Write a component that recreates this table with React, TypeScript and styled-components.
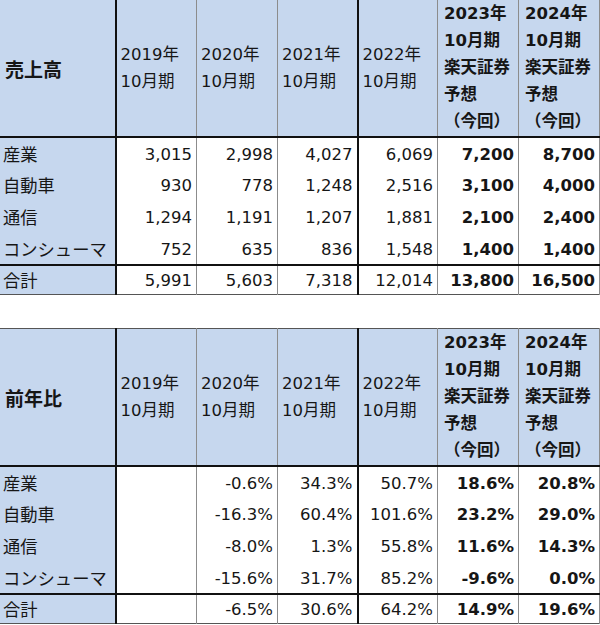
import * as React from "react";
import styled, { createGlobalStyle } from "styled-components";

const GlobalStyle = createGlobalStyle`
  html, body {
    margin: 0;
    padding: 0;
    background: #ffffff;
  }
  body {
    font-family: "DejaVu Sans", "Noto Sans CJK JP", sans-serif;
    color: #161616;
  }
`;

const BLUE = "#c6d7ee";
const THIN = "1px solid #8c8c8c";
const THICK = "2px solid #111111";

const Page = styled.div`
  width: 600px;
  margin: -1px 0 0 -1px;
  display: flex;
  flex-direction: column;
  gap: 33px;
`;

const Table = styled.table`
  border-collapse: collapse;
  table-layout: fixed;
  width: 600px;
  font-size: 16.5px;
  border: 1px solid #555555;
`;

const HeadRow = styled.tr`
  height: 137px;
  border-bottom: ${THICK};
`;

const BodyRow = styled.tr<{ $total?: boolean }>`
  height: ${(p) => (p.$total ? "30px" : "32px")};
  border-top: ${(p) => (p.$total ? THICK : "none")};
`;

// corner cell: 売上高 / 前年比
const Corner = styled.th`
  background: ${BLUE};
  text-align: left;
  vertical-align: middle;
  padding: 2px 0 0 5px;
  font-size: 19px;
  font-weight: bold;
  border-right: ${THICK};
`;

const YearHead = styled.th<{ $bold?: boolean; $thickRight?: boolean }>`
  background: ${BLUE};
  text-align: left;
  vertical-align: middle;
  font-weight: ${(p) => (p.$bold ? "bold" : "normal")};
  line-height: 27px;
  padding: 0 0 0 ${(p) => (p.$bold ? "6px" : "4px")};
  white-space: nowrap;
  border-right: ${(p) => (p.$thickRight ? THICK : THIN)};
`;

const Label = styled.td`
  background: ${BLUE};
  padding: 0 0 0 3px;
  text-align: left;
  font-size: 17.3px;
  white-space: nowrap;
  border-right: ${THICK};
`;

const Num = styled.td<{ $bold?: boolean; $thickRight?: boolean }>`
  background: #ffffff;
  text-align: right;
  padding: 2px 4px 0 0;
  font-weight: ${(p) => (p.$bold ? "bold" : "normal")};
  white-space: nowrap;
  border-right: ${(p) => (p.$thickRight ? THICK : THIN)};
`;

const widths = [116, 81, 81, 80, 80, 81, 81];

const years = ["2019", "2020", "2021", "2022"];
const forecasts = ["2023", "2024"];

type Row = { label: string; values: string[] };

const sales: Row[] = [
  { label: "産業", values: ["3,015", "2,998", "4,027", "6,069", "7,200", "8,700"] },
  { label: "自動車", values: ["930", "778", "1,248", "2,516", "3,100", "4,000"] },
  { label: "通信", values: ["1,294", "1,191", "1,207", "1,881", "2,100", "2,400"] },
  { label: "コンシューマ", values: ["752", "635", "836", "1,548", "1,400", "1,400"] },
];
const salesTotal: Row = {
  label: "合計",
  values: ["5,991", "5,603", "7,318", "12,014", "13,800", "16,500"],
};

const growth: Row[] = [
  { label: "産業", values: ["", "-0.6%", "34.3%", "50.7%", "18.6%", "20.8%"] },
  { label: "自動車", values: ["", "-16.3%", "60.4%", "101.6%", "23.2%", "29.0%"] },
  { label: "通信", values: ["", "-8.0%", "1.3%", "55.8%", "11.6%", "14.3%"] },
  { label: "コンシューマ", values: ["", "-15.6%", "31.7%", "85.2%", "-9.6%", "0.0%"] },
];
const growthTotal: Row = {
  label: "合計",
  values: ["", "-6.5%", "30.6%", "64.2%", "14.9%", "19.6%"],
};

const DataRow: React.FC<{ row: Row; total?: boolean }> = ({ row, total }) => (
  <BodyRow $total={total}>
    <Label>{row.label}</Label>
    {row.values.map((v, i) => (
      <Num key={i} $bold={i >= 4} $thickRight={i === 2}>
        {v}
      </Num>
    ))}
  </BodyRow>
);

const DataTable: React.FC<{ title: string; rows: Row[]; total: Row }> = ({
  title,
  rows,
  total,
}) => (
  <Table>
    <colgroup>
      {widths.map((w, i) => (
        <col key={i} style={{ width: w }} />
      ))}
    </colgroup>
    <thead>
      <HeadRow>
        <Corner>{title}</Corner>
        {years.map((y, i) => (
          <YearHead key={y} $thickRight={i === 2}>
            {y}年
            <br />
            10月期
          </YearHead>
        ))}
        {forecasts.map((y) => (
          <YearHead key={y} $bold>
            {y}年
            <br />
            10月期
            <br />
            楽天証券
            <br />
            予想
            <br />
            （今回）
          </YearHead>
        ))}
      </HeadRow>
    </thead>
    <tbody>
      {rows.map((r) => (
        <DataRow key={r.label} row={r} />
      ))}
      <DataRow row={total} total />
    </tbody>
  </Table>
);

export default function App() {
  return (
    <>
      <GlobalStyle />
      <Page>
        <DataTable title="売上高" rows={sales} total={salesTotal} />
        <DataTable title="前年比" rows={growth} total={growthTotal} />
      </Page>
    </>
  );
}
